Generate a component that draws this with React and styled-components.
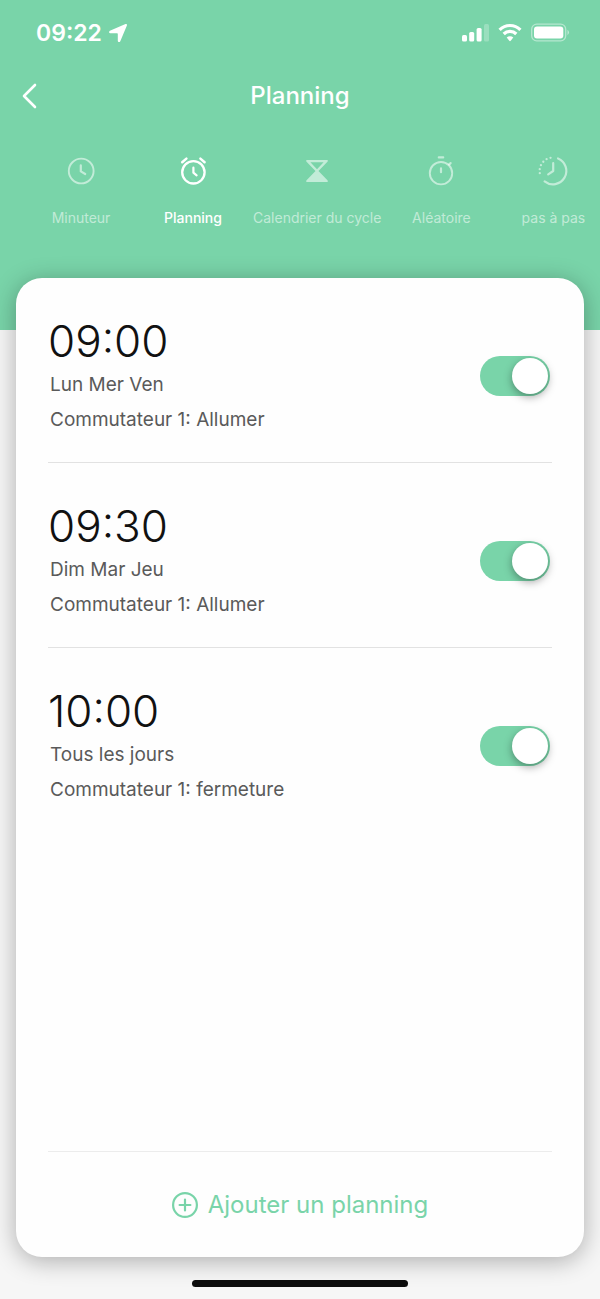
import { useState } from 'react';
import styled, { createGlobalStyle } from 'styled-components';

const tabs = [
    { id: 'timer', label: 'Minuteur', Icon: ClockIcon },
    { id: 'schedule', label: 'Planning', Icon: AlarmIcon },
    { id: 'cycle', label: 'Calendrier du cycle', Icon: HourglassIcon },
    { id: 'random', label: 'Aléatoire', Icon: StopwatchIcon },
    { id: 'step', label: 'pas à pas', Icon: StepIcon },
];

const initialSchedules = [
    { id: 1, time: '09:00', days: 'Lun Mer Ven', action: 'Commutateur 1: Allumer', enabled: true },
    { id: 2, time: '09:30', days: 'Dim Mar Jeu', action: 'Commutateur 1: Allumer', enabled: true },
    { id: 3, time: '10:00', days: 'Tous les jours', action: 'Commutateur 1: fermeture', enabled: true },
];

const App = () => {
    const [active, setActive] = useState('schedule');
    const [schedules, setSchedules] = useState(initialSchedules);

    const toggle = (id) => {
        setSchedules(schedules.map((s) => (s.id === id ? { ...s, enabled: !s.enabled } : s)));
    };

    return (
        <Page>
            <GlobalStyle />
            <Header>
                <StatusBar>
                    <Clock>
                        09:22
                        <LocationIcon />
                    </Clock>
                    <StatusIcons />
                </StatusBar>
                <NavBar>
                    <BackButton aria-label="Retour">
                        <svg width="16" height="26" viewBox="0 0 16 26" fill="none" stroke="currentColor" strokeWidth="2.6" strokeLinecap="round" strokeLinejoin="round">
                            <path d="M13 2 2 13l11 11" />
                        </svg>
                    </BackButton>
                    <Title>Planning</Title>
                </NavBar>
                <Tabs>
                    {tabs.map(({ id, label, Icon }) => (
                        <Tab key={id} $active={id === active} onClick={() => setActive(id)}>
                            <Icon />
                            {label}
                        </Tab>
                    ))}
                </Tabs>
            </Header>
            <Card>
                <List>
                    {schedules.map((s) => (
                        <Row key={s.id}>
                            <label htmlFor={`schedule-${s.id}`}>
                                <Time>{s.time}</Time>
                                <Detail>{s.days}</Detail>
                                <Detail>{s.action}</Detail>
                            </label>
                            <Switch id={`schedule-${s.id}`} type="checkbox" checked={s.enabled} onChange={() => toggle(s.id)} />
                        </Row>
                    ))}
                </List>
                <AddButton>
                    <svg width="26" height="26" viewBox="1 1 26 26" fill="none" stroke="currentColor" strokeWidth="2.2" strokeLinecap="round">
                        <circle cx="14" cy="14" r="11.9" />
                        <path d="M14 8.6v10.8M8.6 14h10.8" />
                    </svg>
                    Ajouter un planning
                </AddButton>
            </Card>
            <HomeIndicator />
        </Page>
    )
}

function TabSvg({ children }) {
    return (
        <svg width="32" height="32" viewBox="0 0 32 32" fill="none" stroke="currentColor" strokeWidth="2.2" strokeLinecap="round" strokeLinejoin="round">
            {children}
        </svg>
    )
}

function ClockIcon() {
    return (
        <TabSvg>
            <circle cx="16.2" cy="16" r="12.4" strokeWidth="1.9" />
            <path d="M15.8 10.4v6l4.4 2.6" />
        </TabSvg>
    )
}

function AlarmIcon() {
    return (
        <TabSvg>
            <circle cx="16.4" cy="17.3" r="11.2" strokeWidth="2.3" />
            <path d="M16.4 12.7v5l3.2 2.6" />
            <path d="m5.2 7.2 4.2-3.6M23.4 3.6l4.2 3.6" strokeWidth="2.5" />
        </TabSvg>
    )
}

function HourglassIcon() {
    return (
        <TabSvg>
            <path d="M5.3 5h21.4v1.6L17.5 16l9.2 9.4V27H5.3v-1.6l9.200-9.400-9.200-9.400ZM9.400 7.200l6.600 7 6.600-7Z" fill="currentColor" fillRule="evenodd" stroke="none" />
        </TabSvg>
    )
}

function StopwatchIcon() {
    return (
        <TabSvg>
            <circle cx="16" cy="18.2" r="11.2" strokeWidth="1.9" />
            <path d="M13.8 2.4h4.4M16 13.4v3.8M24 9.600l1.600-1.500" />
        </TabSvg>
    )
}

function StepIcon() {
    return (
        <TabSvg>
            <path d="M21 3.500A13.400 13.400 0 1 1 7.600 26.400" />
            <path d="M2.800 18.200A13.400 13.400 0 0 1 16.600 2.600" strokeDasharray="0 4.100" strokeWidth="2.300" />
            <path d="M16.200 8.200v7.800l-5 3.400" />
        </TabSvg>
    )
}

function LocationIcon() {
    return (
        <svg width="20" height="20" viewBox="0 0 20 20" fill="currentColor">
            <path d="M17.500 1c1-.4 1.800.4 1.400 1.400l-6.600 15.800c-.6 1.300-2.500 1-2.500-.4V11c0-.5-.2-.7-.7-.7H2.300c-1.400 0-1.700-1.900-.4-2.500Z" />
        </svg>
    )
}

function StatusIcons() {
    return (
        <svg width="108" height="20" viewBox="0 0 108 20" fill="currentColor" aria-hidden="true">
            <rect x="0" y="12" width="5" height="6.500" rx="1.500" />
            <rect x="7.200" y="9" width="5" height="9.500" rx="1.500" />
            <rect x="14.600" y="5" width="5" height="13.500" rx="1.500" />
            <rect x="22" y="1" width="5" height="17.500" rx="1.500" opacity=".25" />
            <g fill="none" stroke="currentColor" strokeWidth="3.200">
                <path d="M37.600 6.800a14.700 14.700 0 0 1 20.800 0" />
                <path d="M41.700 11a8.900 8.900 0 0 1 12.600 0" />
            </g>
            <path d="M44.700 14.500a4.700 4.700 0 0 1 6.600 0L48.700 17.800q-.7.700-1.400 0Z" />
            <rect x="69.700" y="1.200" width="34" height="16.600" rx="5" fill="none" stroke="currentColor" strokeWidth="1.300" opacity=".45" />
            <rect x="72" y="3.400" width="29.300" height="12.200" rx="3" />
            <path d="M105.500 6.800q3 2.700 0 5.400Z" opacity=".5" />
        </svg>
    )
}

const GlobalStyle = createGlobalStyle`
    * {
        box-sizing: border-box;
    }

    body {
        margin: 0;
        background-color: #f6f6f6;
        font-family: Inter, "Liberation Sans", sans-serif;
    }

    button {
        border: none;
        background: none;
        padding: 0;
        font-family: inherit;
        color: inherit;
        cursor: pointer;
    }

    svg {
        display: block;
        flex: none;
    }
`;

const Page = styled.div`
    min-height: 100vh;
    display: flex;
    flex-direction: column;
`;

const Header = styled.header`
    background-color: #79d4a9;
    color: #fff;
    padding-bottom: 102px;
`;

const StatusBar = styled.div`
    height: 66px;
    padding: 0 30px 0 36px;
    display: flex;
    align-items: center;
    justify-content: space-between;
`;

const Clock = styled.div`
    display: flex;
    align-items: center;
    gap: 6px;
    font-size: 23px;
    font-weight: 600;
`;

const NavBar = styled.div`
    height: 60px;
    padding: 0 22px;
    display: grid;
    grid-template-columns: 40px 1fr 40px;
    align-items: center;
`;

const BackButton = styled.button`
    height: 40px;
`;

const Title = styled.h1`
    margin: 0;
    text-align: center;
    font-size: 24px;
    line-height: 28px;
    font-weight: 500;
`;

const Tabs = styled.nav`
    display: flex;
    padding: 29px 0 0 25px;
    overflow-x: auto;
    scrollbar-width: none;
`;

const Tab = styled.button`
    flex: none;
    min-width: 112px;
    padding: 0 4px;
    display: flex;
    flex-direction: column;
    align-items: center;
    gap: 21px;
    font-size: 14px;
    line-height: 20px;
    font-weight: ${({ $active }) => ($active ? 500 : 400)};
    color: ${({ $active }) => ($active ? '#fff' : 'rgba(255, 255, 255, .55)')};
`;

const Card = styled.main`
    flex: 1;
    margin: -52px 16px 0;
    padding: 0 32px;
    display: flex;
    flex-direction: column;
    border-radius: 26px;
    background-color: #fefefe;
    box-shadow: 0 4px 24px rgba(0, 0, 0, .3);
`;

const List = styled.ul`
    flex: 1;
    margin: 0;
    padding: 0;
    list-style: none;
`;

const Row = styled.li`
    display: flex;
    align-items: center;
    justify-content: space-between;
    padding: 37px 2px 25px 0;
    border-bottom: 1px solid #e2e2e2;

    &:last-child {
        border-bottom: none;
    }
`;

const Time = styled.div`
    font-size: 44px;
    line-height: 52px;
    font-weight: 300;
    color: #111;
`;

const Detail = styled.div`
    padding-left: 2px;
    font-size: 19px;
    line-height: 35px;
    font-weight: 400;
    color: #5a5a5a;
`;

const Switch = styled.input`
    appearance: none;
    flex: none;
    display: flex;
    align-items: center;
    width: 70px;
    height: 40px;
    margin: 0;
    padding: 0 2px;
    border-radius: 20px;
    background-color: #ccc;
    cursor: pointer;

    &::before {
        content: '';
        width: 36px;
        height: 36px;
        border-radius: 50%;
        background-color: #fff;
        box-shadow: 0 3px 8px rgba(0, 0, 0, .35);
    }

    &:checked {
        justify-content: flex-end;
        background-color: #79d4a9;
    }
`;

const AddButton = styled.button`
    height: 106px;
    display: flex;
    align-items: center;
    justify-content: center;
    gap: 10px;
    border-top: 1px solid #ececec;
    font-size: 24px;
    font-weight: 400;
    color: #79d4a9;
`;

const HomeIndicator = styled.div`
    width: 36%;
    height: 7px;
    margin: 23px auto 12px;
    border-radius: 4px;
    background-color: #0c0c0c;
`;

export default App
